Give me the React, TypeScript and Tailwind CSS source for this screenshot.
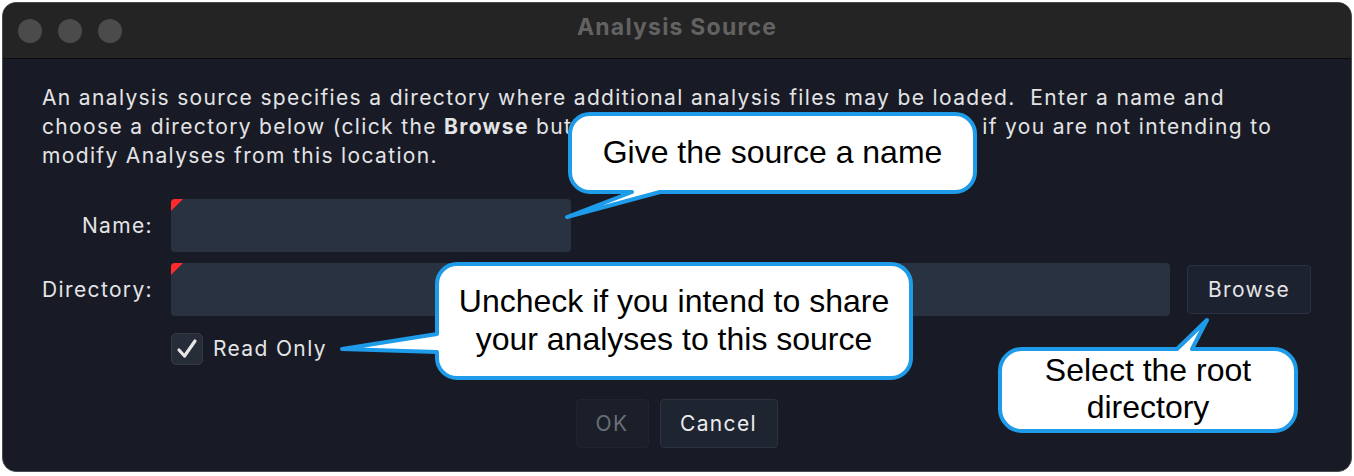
import React from 'react';

const Callout: React.FC<{ path: string }> = ({ path }) => (
  <path d={path} fill="#ffffff" stroke="#1e9be9" strokeWidth={4} strokeLinejoin="round" />
);

export default function App() {
  return (
    <div className="relative w-[1354px] h-[476px] bg-white p-[2px] overflow-hidden">
      {/* Dialog window */}
      <div className="w-[1350px] h-[470px] rounded-[14px] border border-[#4a4d52] overflow-hidden flex flex-col bg-[#181b25]">
        {/* Title bar */}
        <div className="relative h-[56px] shrink-0 bg-[#242424] border-b border-[#0c0c0c] flex items-center justify-center pb-[6px]">
          <div className="absolute left-[15px] top-[16px] flex gap-[16px]">
            <span className="w-[24px] h-[24px] rounded-full bg-[#4b4b4b]" />
            <span className="w-[24px] h-[24px] rounded-full bg-[#4b4b4b]" />
            <span className="w-[24px] h-[24px] rounded-full bg-[#4b4b4b]" />
          </div>
          <span className="font-['Inter',sans-serif] font-bold text-[23px] text-[#626262] tracking-[1.2px]">
            Analysis Source
          </span>
        </div>

        {/* Body */}
        <div className="flex-1 flex flex-col pt-[24px] pl-[39px] pr-[40px] font-['Inter',sans-serif] text-[21px] tracking-[1.35px] text-[#e4e4e6]">
          <div className="leading-[29px] whitespace-nowrap">
            <div>An analysis source specifies a directory where additional analysis files may be loaded.&nbsp; Enter a name and</div>
            <div>
              choose a directory below (click the <span className="font-bold">Browse</span> button).&nbsp; Check the Read Only box only if you are not intending to
            </div>
            <div>modify Analyses from this location.</div>
          </div>

          <div className="mt-[29px] grid grid-cols-[111px_1fr] gap-x-[18px] items-center">
            <span className="text-right">Name:</span>
            <div className="relative w-[400px] h-[53px] rounded-[4px] bg-[#283241] overflow-hidden">
              <span className="absolute left-0 top-0 w-0 h-0 border-t-[12px] border-r-[12px] border-t-[#ff2a2a] border-r-transparent" />
            </div>

            <span className="text-right mt-[11px]">Directory:</span>
            <div className="mt-[11px] flex items-center gap-[17px]">
              <div className="relative flex-1 h-[53px] rounded-[4px] bg-[#283241] overflow-hidden">
                <span className="absolute left-0 top-0 w-0 h-0 border-t-[12px] border-r-[12px] border-t-[#ff2a2a] border-r-transparent" />
              </div>
              <button className="w-[124px] h-[49px] rounded-[4px] bg-[#1d2230] border border-[#2b3140] text-[21px] tracking-[1.35px] text-[#e4e4e6]">
                Browse
              </button>
            </div>

            <span />
            <div className="mt-[17px] flex items-center gap-[10px]">
              <span className="w-[32px] h-[32px] rounded-[5px] bg-[#262c38] border border-[#323947] flex items-center justify-center">
                <svg width="22" height="22" viewBox="0 0 22 22">
                  <path d="M3 12 L8.5 18 L19 3" fill="none" stroke="#e6e6e6" strokeWidth={3.2} strokeLinecap="round" strokeLinejoin="round" />
                </svg>
              </span>
              <span>Read Only</span>
            </div>
          </div>

          <div className="mt-[34px] flex justify-center gap-[11px]">
            <button className="w-[73px] h-[49px] rounded-[4px] bg-[#1b1f2a] border border-[#20242f] text-[21px] tracking-[1.35px] text-[#6a6e77]">
              OK
            </button>
            <button className="w-[118px] h-[49px] rounded-[4px] bg-[#1f2431] border border-[#2c3241] text-[21px] tracking-[1.35px] text-[#ececee]">
              Cancel
            </button>
          </div>
        </div>
      </div>

      {/* Annotation callouts */}
      <svg className="absolute left-0 top-0 pointer-events-none" width="1354" height="476" viewBox="0 0 1354 476">
        <Callout path="M590 114 H955 A20 20 0 0 1 975 134 V172 A20 20 0 0 1 955 192 H660 L567 217 L632 192 H590 A20 20 0 0 1 570 172 V134 A20 20 0 0 1 590 114 Z" />
        <Callout path="M457 264 H891 A20 20 0 0 1 911 284 V358 A20 20 0 0 1 891 378 H457 A20 20 0 0 1 437 358 V352 L342 349 L437 334 V284 A20 20 0 0 1 457 264 Z" />
        <Callout path="M1022 349 H1177 L1207 320 L1192 349 H1274 A22 22 0 0 1 1296 371 V409 A22 22 0 0 1 1274 431 H1022 A22 22 0 0 1 1000 409 V371 A22 22 0 0 1 1022 349 Z" />
      </svg>
      <div className="absolute left-[570px] top-[114px] w-[405px] h-[78px] flex items-center justify-center font-['Liberation_Sans',Arial,sans-serif] text-[32px] leading-[38px] text-black pb-[2px]">
        Give the source a name
      </div>
      <div className="absolute left-[437px] top-[264px] w-[474px] h-[114px] flex flex-col items-center justify-center font-['Liberation_Sans',Arial,sans-serif] text-[32px] leading-[38px] text-black text-center pb-[2px]">
        <span>Uncheck if you intend to share</span>
        <span>your analyses to this source</span>
      </div>
      <div className="absolute left-[1000px] top-[349px] w-[296px] h-[82px] flex flex-col items-center justify-center font-['Liberation_Sans',Arial,sans-serif] text-[32px] leading-[37px] text-black text-center pb-[2px]">
        <span>Select the root</span>
        <span>directory</span>
      </div>
    </div>
  );
}
